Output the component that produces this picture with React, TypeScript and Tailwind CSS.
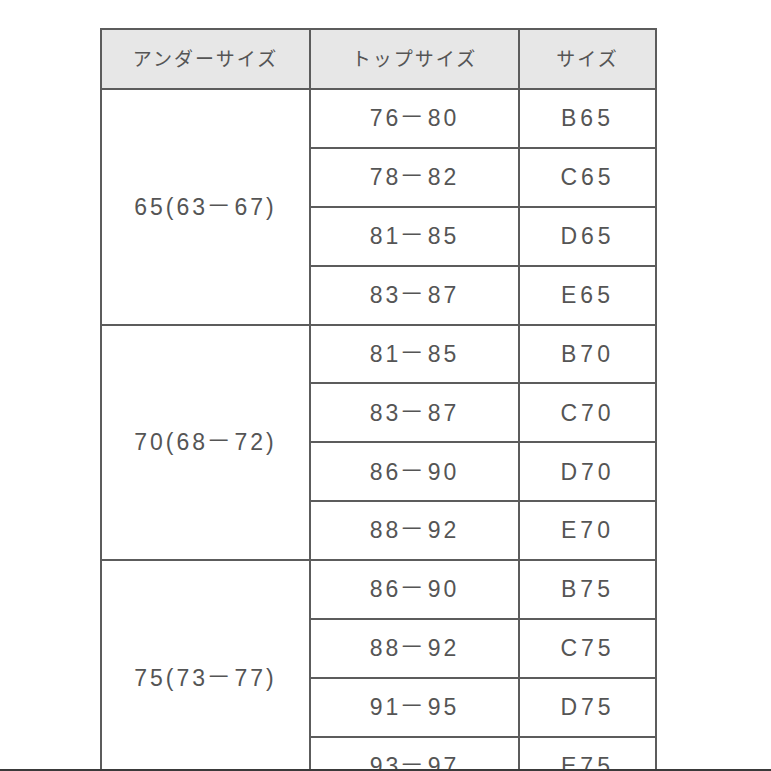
import React from "react";

const groups = [
  { under: "65(63−67)", rows: [["76−80", "B65"], ["78−82", "C65"], ["81−85", "D65"], ["83−87", "E65"]] },
  { under: "70(68−72)", rows: [["81−85", "B70"], ["83−87", "C70"], ["86−90", "D70"], ["88−92", "E70"]] },
  { under: "75(73−77)", rows: [["86−90", "B75"], ["88−92", "C75"], ["91−95", "D75"], ["93−97", "E75"]] },
];

function Range({ text }: { text: string }) {
  const parts = text.split("−");
  return (
    <>
      {parts[0]}
      <span className="inline-block scale-x-[1.6] -translate-y-[2px] mx-[5px]">−</span>
      {parts[1]}
    </>
  );
}

export default function App() {
  return (
    <div className="w-[771px] h-[771px] bg-white overflow-hidden flex flex-col" style={{ fontFamily: '"Liberation Sans", "Noto Sans CJK JP", sans-serif' }}>
      <div className="h-[769px] overflow-hidden pt-[28px] pl-[100px]">
        <table className="table-fixed border-collapse text-[#555555]">
          <colgroup>
            <col className="w-[209px]" />
            <col className="w-[209px]" />
            <col className="w-[137px]" />
          </colgroup>
          <thead>
            <tr className="h-[60px] bg-[#e7e7e7]">
              <th className="border-2 border-[#5c5c5c] font-normal text-[19px] tracking-[2px] text-center align-middle pt-[2px]">アンダーサイズ</th>
              <th className="border-2 border-[#5c5c5c] font-normal text-[19px] tracking-[2px] text-center align-middle pt-[2px]">トップサイズ</th>
              <th className="border-2 border-[#5c5c5c] font-normal text-[19px] tracking-[2px] text-center align-middle pt-[2px]">サイズ</th>
            </tr>
          </thead>
          <tbody>
            {groups.map((g) =>
              g.rows.map((r, i) => (
                <tr key={g.under + i} className="h-[58.9px]">
                  {i === 0 && (
                    <td rowSpan={4} className="border-2 border-[#5c5c5c] text-[23px] tracking-[3px] text-center align-middle">
                      <Range text={g.under} />
                    </td>
                  )}
                  <td className="border-2 border-[#5c5c5c] text-[23px] tracking-[3px] text-center align-middle">
                    <Range text={r[0]} />
                  </td>
                  <td className="border-2 border-[#5c5c5c] text-[23px] tracking-[4px] text-center align-middle">{r[1]}</td>
                </tr>
              ))
            )}
          </tbody>
        </table>
      </div>
      <div className="h-[2px] bg-[#3a3a3a]" />
    </div>
  );
}
